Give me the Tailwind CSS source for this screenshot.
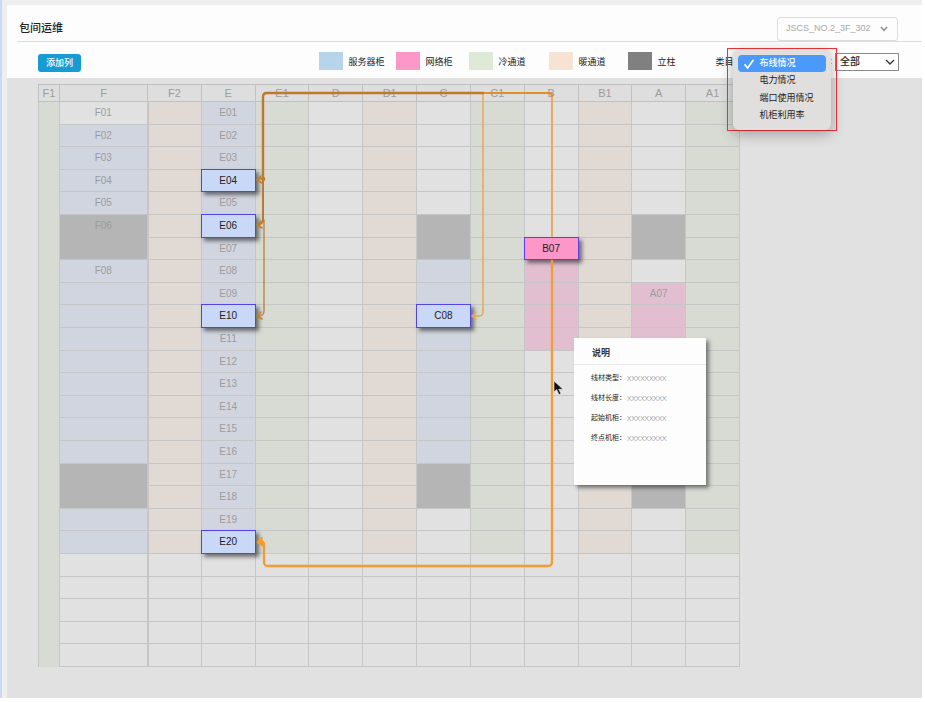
<!DOCTYPE html>
<html lang="zh-CN">
<head>
    <meta charset="UTF-8">
    <meta name="viewport" content="width=device-width, initial-scale=1">
    <title>包间运维</title>
    <script src="https://cdn.jsdelivr.net/npm/@tailwindcss/browser@4"></script>
</head>
<body class="bg-white font-['Liberation_Sans','Noto_Sans_CJK_SC',sans-serif] text-[#222]">

<div class="mr-[3px] border-l-2 border-[#c9d9f8] bg-[#eeeeee] pt-[5px] pl-[5px]">
    <main class="bg-[#fdfdfd]">
        <header class="ml-[10px] flex h-[37px] items-end justify-between border-b border-[#dcdcdc] pr-6 pl-[2px]">
            <h1 class="pb-1 text-[11px] leading-[18px] font-medium text-[#222]">包间运维</h1>
            <div class="relative">
                <select aria-label="包间" class="block h-6 w-[121px] appearance-none rounded-[3px] border border-[#dddddd] bg-[#fdfdfd] pl-2 text-[9px] text-[#a8a8a8]">
                    <option>JSCS_NO.2_3F_302</option>
                </select>
                <svg class="pointer-events-none absolute top-[9px] right-[10px] h-[6px] w-[8px]" viewBox="0 0 8 6" fill="none" stroke="#8a8a8a" stroke-width="1.5"><path d="M1 1l3 3.4L7 1"/></svg>
            </div>
        </header>

        <div class="flex h-9 items-end justify-between pr-[23px] pb-[6px] pl-[31px]">
            <button class="h-[18px] w-[43px] rounded-[3px] bg-[#179bd4] text-[9px] leading-[18px] font-medium text-white">添加列</button>
            <div class="flex items-center">
                <ul class="grid grid-cols-[77px_73px_80px_79px_87px] text-[9px] leading-5">
                    <li class="flex gap-[5px]"><span class="h-[18px] w-6 bg-[#b8d4eb]"></span>服务器柜</li>
                    <li class="flex gap-[5px]"><span class="h-[18px] w-6 bg-[#fb98c8]"></span>网络柜</li>
                    <li class="flex gap-[5px]"><span class="h-[18px] w-6 bg-[#dfead6]"></span>冷通道</li>
                    <li class="flex gap-[5px]"><span class="h-[18px] w-6 bg-[#f6e3d4]"></span>暖通道</li>
                    <li class="flex gap-[5px]"><span class="h-[18px] w-6 bg-[#808080]"></span>立柱</li>
                </ul>
                <div class="relative flex items-center gap-1">
                    <label for="category" class="text-[9px] leading-5">类目</label>
                    <select id="category" class="h-[18px] w-[92px] appearance-none border border-[#8a8a8a] bg-white pl-1 text-[9px]">
                        <option>布线情况</option>
                        <option>电力情况</option>
                        <option>端口使用情况</option>
                        <option>机柜利用率</option>
                    </select>
                    <!-- opened category menu -->
                    <div class="absolute -top-1 left-3 z-20 border border-[#f0353a]">
                        <ul role="listbox" aria-label="类目" class="mx-[5px] w-[98px] rounded-[6px] bg-[#e0dfdd] px-[5px] py-[6px] text-[9px] leading-[17px] shadow-[0_4px_14px_rgba(0,0,0,0.3)]">
                            <li role="option" aria-selected="true" class="flex h-[17px] items-center rounded-[4px] bg-[#4c99fd] font-medium text-white">
                                <svg class="mr-[5px] ml-[6px] h-[10px] w-[10px]" viewBox="0 0 10 10" fill="none" stroke="#fff" stroke-width="1.7" stroke-linecap="round" stroke-linejoin="round"><path d="M1 5.8L3.6 9 9 1.4"/></svg>布线情况
                            </li>
                            <li role="option" class="h-[18px] pl-[21px]">电力情况</li>
                            <li role="option" class="h-[17px] pl-[21px]">端口使用情况</li>
                            <li role="option" class="h-[17px] pl-[21px]">机柜利用率</li>
                        </ul>
                    </div>
                </div>
                <label for="scope" class="pr-[3px] text-[9px]">:</label>
                <div class="relative">
                    <select id="scope" class="block h-[18px] w-16 appearance-none border border-[#8a8a8a] bg-white pl-1 text-[10px] leading-4 font-medium">
                        <option>全部</option>
                    </select>
                    <svg class="pointer-events-none absolute top-[6px] right-1 h-[6px] w-[10px]" viewBox="0 0 10 6" fill="none" stroke="#333" stroke-width="1.3"><path d="M1 1l4 4 4-4"/></svg>
                </div>
            </div>
        </div>

        <section class="overflow-hidden bg-[#e1e1e1] pt-[6px] pb-[31px] pl-[31px]">
            <div class="relative w-[702px]">
                <table class="w-full table-fixed border-collapse text-[10px] leading-3 text-[#9c9c9c]">
                    <colgroup>
                        <col class="w-[21px]">
                        <col class="w-[88px]">
                        <col span="11">
                    </colgroup>
                    <thead><tr id="rackHead"></tr></thead>
                    <tbody id="rackBody"></tbody>
                </table>

                <!-- cable routes between cabinets -->
                <svg class="pointer-events-none absolute top-0 left-0 z-10 h-full w-full" fill="none" stroke-linecap="round">
                    <path d="M445 9V228Q445 232 441 232H435" stroke="#e6a95a" stroke-width="1.5"/>
                    <path d="M438 229l-4 3 4 3" stroke="#e6a95a" stroke-width="1.5"/>
                    <path d="M445 9H511Q514 9 514 12V152" stroke="#eba04a" stroke-width="1.7"/>
                    <path d="M445 9H511Q514 9 514 12" stroke="#e38f28" stroke-width="2.2"/>
                    <path d="M445 9H229Q225 9 225 13V92" stroke="#bd7a2b" stroke-width="2.4"/>
                    <path d="M225 92V136Q225 139 220 141" stroke="#bd7a2b" stroke-width="2"/>
                    <path d="M226 136V227Q226 232 220 232" stroke="#c08340" stroke-width="1.4"/>
                    <path d="M225 92Q228 96 225 97L223 94 219 96M223 92l-4 4 5 3M223 137l-4 4 5 3M223 228l-4 4 5 3" stroke="#c17d2c" stroke-width="1.5"/>
                    <path d="M514 177V478Q514 482 510 482H230Q226 482 226 478V463Q226 459 223 458" stroke="#f19d33" stroke-width="2.3"/>
                    <path d="M219 458l5-5v3l3 3-2 3z" fill="#f19d33" stroke="#f19d33"/>
                </svg>

                <svg class="absolute top-[296px] left-[515px] z-10 h-[16px] w-[11px]" viewBox="0 0 11 16"><path d="M1 1v11l2.6-2.4L6 14.6l2-1-2.3-4.4H10z" fill="#111" stroke="#eee" stroke-width=".6"/></svg>

                <aside class="absolute top-[254px] left-[536px] z-10 h-[147px] w-[132px] bg-[#fdfdfd] shadow-[3px_3px_4px_rgba(0,0,0,0.45)]">
                    <h2 class="h-[27px] border-b border-[#e8e8e8] pt-[2px] pl-[18px] text-[9px] leading-[26px] font-bold text-[#333]">说明</h2>
                    <dl class="grid grid-cols-[36px_1fr] pt-[3px] pl-[17px] text-[7px] leading-5">
                        <dt>线材类型：</dt><dd class="font-['Noto_Sans',sans-serif] text-[8px] font-light text-[#8c8c8c]">XXXXXXXXX</dd>
                        <dt>线材长度：</dt><dd class="font-['Noto_Sans',sans-serif] text-[8px] font-light text-[#8c8c8c]">XXXXXXXXX</dd>
                        <dt>起始机柜：</dt><dd class="font-['Noto_Sans',sans-serif] text-[8px] font-light text-[#8c8c8c]">XXXXXXXXX</dd>
                        <dt>终点机柜：</dt><dd class="font-['Noto_Sans',sans-serif] text-[8px] font-light text-[#8c8c8c]">XXXXXXXXX</dd>
                    </dl>
                </aside>
            </div>
        </section>
    </main>
</div>

<script>
    const columns = ['F1', 'F', 'F2', 'E', 'E1', 'D', 'D1', 'C', 'C1', 'B', 'B1', 'A', 'A1'];
    const fills = {
        cold: 'bg-[#d8dbd4]',
        warm: 'bg-[#e1d9d3]',
        server: 'bg-[#d1d5e0]',
        network: 'bg-[#e2bfd0]',
        pillar: 'bg-[#b5b5b5]'
    };
    // [type, first row, last row], rows count from 1
    const zones = {
        F: [['server', 2, 5], ['pillar', 6, 7], ['server', 8, 16], ['pillar', 17, 18], ['server', 19, 20]],
        F2: [['warm', 1, 20]],
        E: [['server', 1, 20]],
        E1: [['cold', 1, 20]],
        D1: [['warm', 1, 20]],
        C: [['pillar', 6, 7], ['server', 8, 16], ['pillar', 17, 18]],
        C1: [['cold', 1, 20]],
        B: [['network', 7, 11]],
        B1: [['warm', 1, 20]],
        A: [['pillar', 6, 7], ['network', 9, 13], ['pillar', 17, 18]],
        A1: [['cold', 1, 20]]
    };
    const active = {E4: 'E04', E6: 'E06', E10: 'E10', E20: 'E20', C10: 'C08', B7: 'B07'};
    const rowHeights = ['h-[23px]', 'h-[22px]', 'h-[23px]', 'h-[22px]', 'h-[23px]'];

    function labelFor(col, row) {
        if (col === 'E' && row <= 20) return 'E' + String(row).padStart(2, '0');
        if (col === 'F' && (row <= 6 || row === 8)) return 'F0' + row;
        if (col === 'A' && row === 9) return 'A07';
        return '';
    }

    function cell(col, row) {
        const zone = (zones[col] || []).find(z => row >= z[1] && row <= z[2]);
        const type = zone ? zone[0] : '';
        const inPillar = type === 'pillar' && row === zone[1];
        const name = active[col + row];
        let content = labelFor(col, row);
        if (name) {
            const color = col === 'B' ? 'bg-[#fd97c9]' : 'bg-[#c9d8f6]';
            content = `<button class="absolute -inset-px z-[5] border border-[#5146e4] ${color} text-[10px] text-[#222] shadow-[3px_3px_4px_rgba(0,0,0,0.5)]">${name}</button>`;
        }
        const side = col === 'F' ? 'border-l border-r-2' : 'border-r';
        return `<td class="relative ${side} border-[#c6c6c6] p-0 text-center ${inPillar ? '' : 'border-b'} ${fills[type] || ''}">${content}</td>`;
    }

    document.getElementById('rackHead').innerHTML = columns.map(c =>
        `<th scope="col" class="h-[17px] border border-[#c0c0c0] bg-[#dedede] p-0 text-[11px] font-normal">${c}</th>`).join('');

    let html = '';
    for (let row = 1; row <= 25; row++) {
        html += `<tr class="${rowHeights[(row - 1) % 5]}">`;
        if (row === 1) html += '<td rowspan="25" class="border-x border-[#c6c6c6] bg-[#d8dbd4]"></td>';
        html += columns.slice(1).map(c => cell(c, row)).join('') + '</tr>';
    }
    document.getElementById('rackBody').innerHTML = html;
</script>

</body>
</html>
